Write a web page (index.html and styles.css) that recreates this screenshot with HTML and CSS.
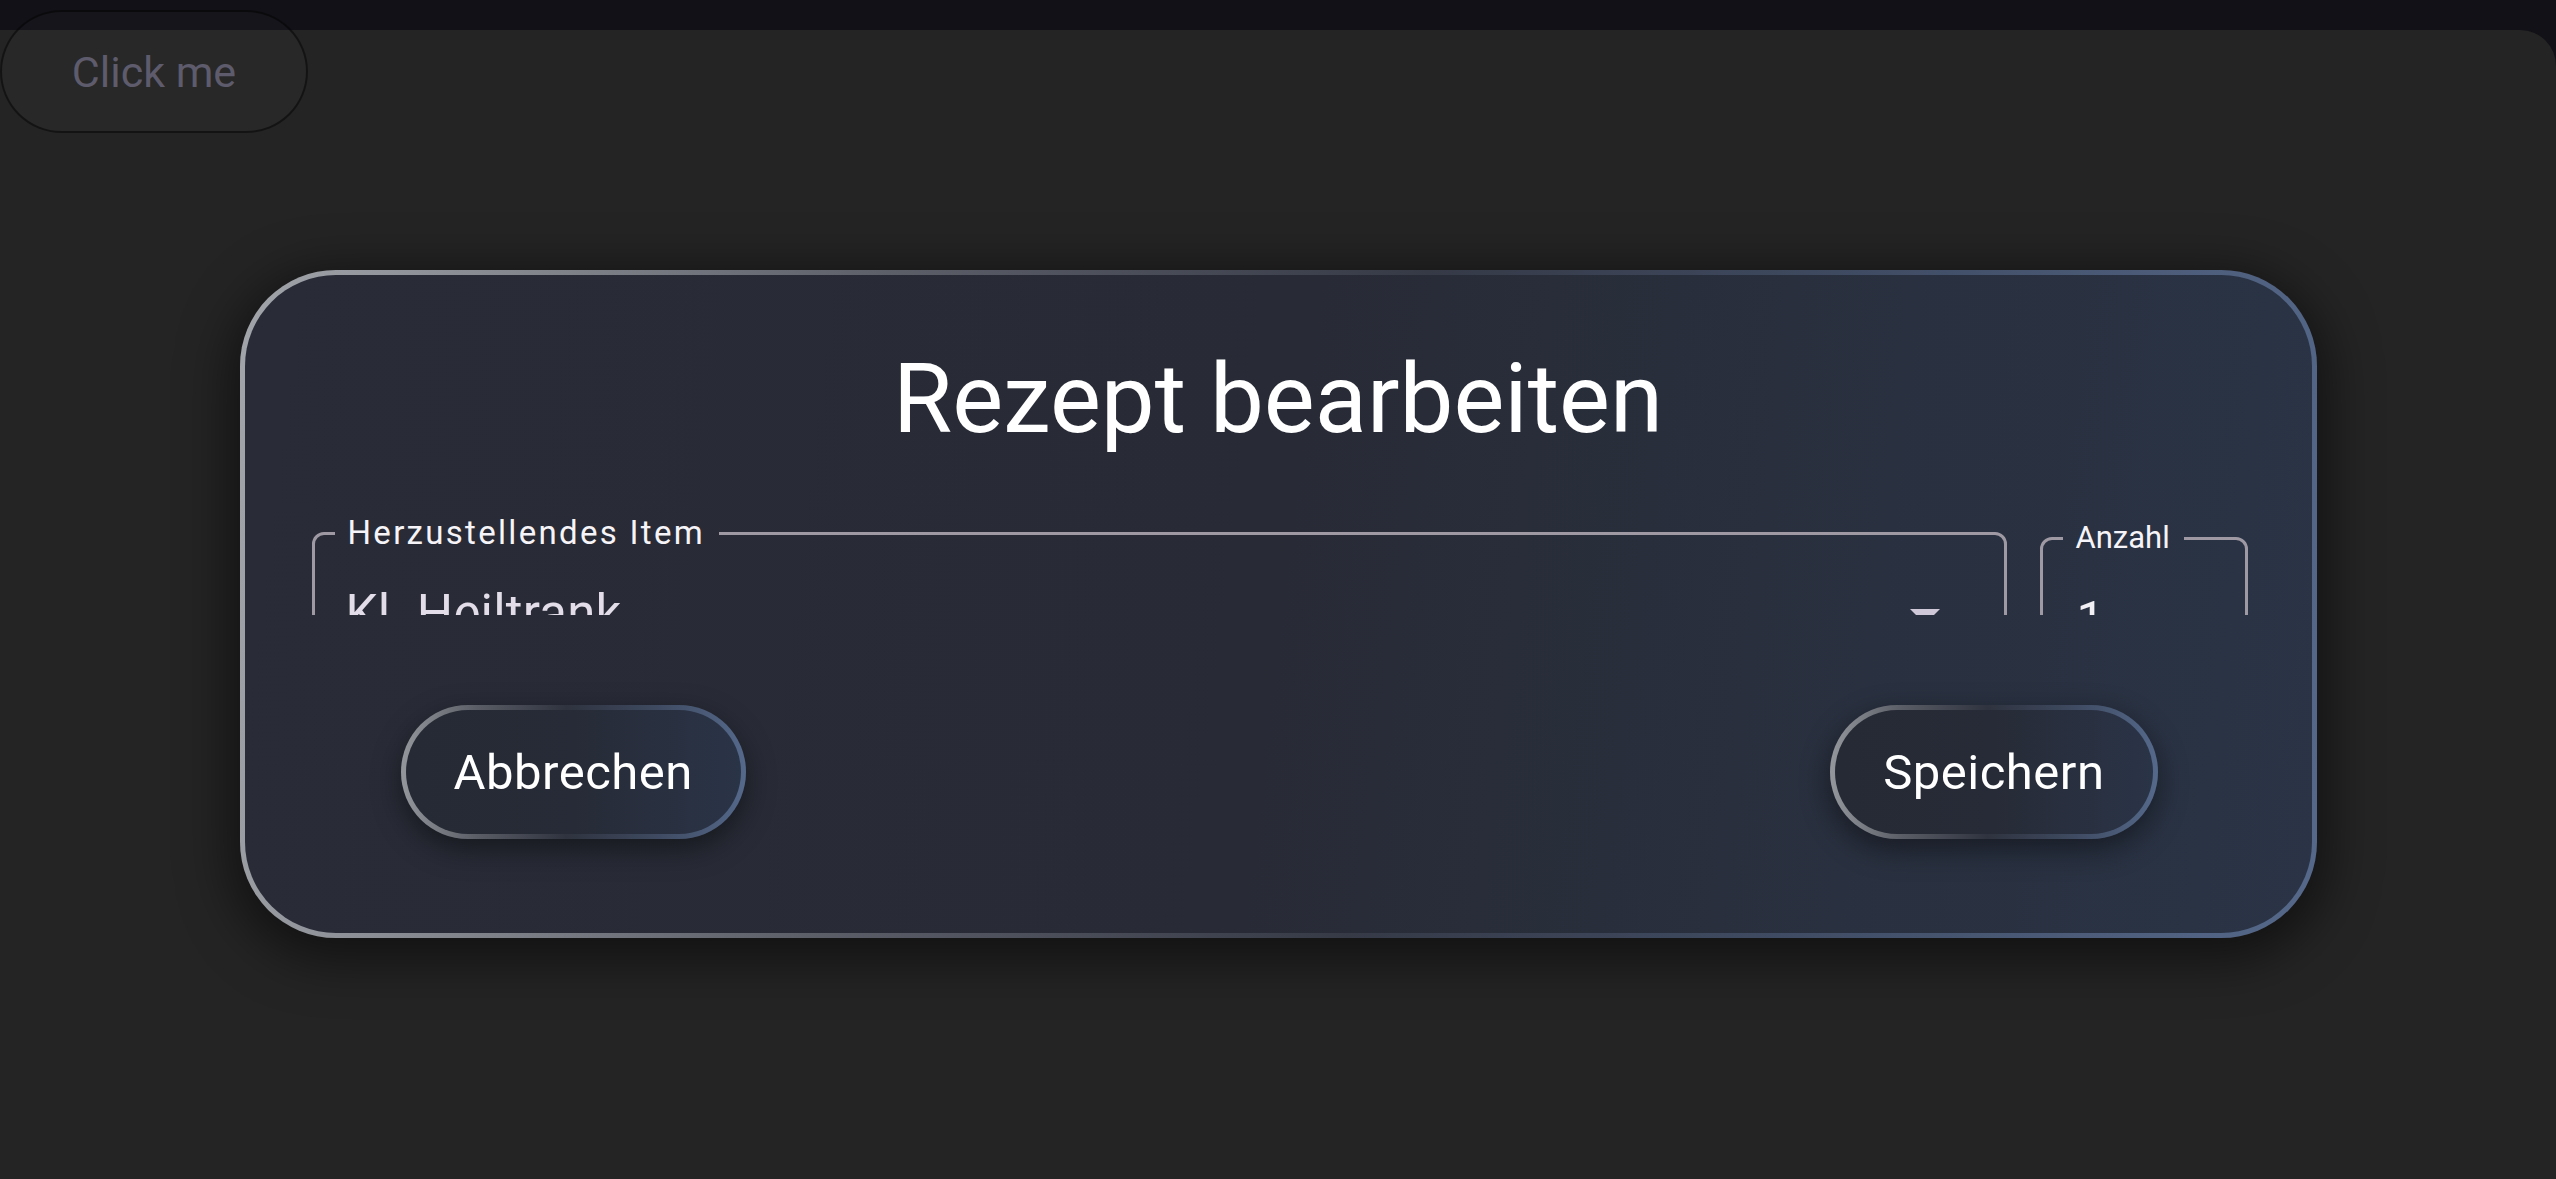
FILE: index.html
```html
<!DOCTYPE html>
<html lang="de">
<head>
<meta charset="utf-8">
<title>Rezept bearbeiten</title>
<link rel="stylesheet" href="styles.css">
</head>
<body>
<div class="page">
  <div class="panel"></div>
  <button class="click-btn" type="button">Click me</button>
  <div class="overlay">
    <section class="dialog">
      <h2 class="dialog-title">Rezept bearbeiten</h2>
      <div class="dialog-content">
        <div class="row">
          <fieldset class="field field-item">
            <legend class="label label-item">Herzustellendes Item</legend>
            <div class="field-body">
              <span class="value value-item">Kl. Heiltrank</span>
              <svg class="arrow" width="30" height="15" viewBox="0 0 30 15"><path d="M0 0 L15 15 L30 0 Z" fill="#cfc8d8"/></svg>
            </div>
          </fieldset>
          <fieldset class="field field-count">
            <legend class="label label-count">Anzahl</legend>
            <div class="field-body">
              <span class="value value-count">1</span>
            </div>
          </fieldset>
        </div>
      </div>
      <div class="dialog-actions">
        <button class="btn" type="button">Abbrechen</button>
        <button class="btn" type="button">Speichern</button>
      </div>
    </section>
  </div>
</div>
</body>
</html>
```

FILE: styles.css
```css
* { box-sizing: border-box; }

html, body {
  margin: 0;
  padding: 0;
  width: 100%;
  height: 100%;
  overflow: hidden;
}

body {
  background: #121117;
  font-family: Roboto, "Liberation Sans", Arial, sans-serif;
}

.page {
  position: relative;
  width: 100%;
  height: 100%;
  padding-top: 30px;
}

.panel {
  height: 100%;
  background: #242424;
  border-top-right-radius: 36px;
}

.click-btn {
  position: absolute;
  left: 0;
  top: 10px;
  width: 308px;
  height: 123px;
  border-radius: 62px;
  border: 2px solid rgba(0, 0, 0, 0.5);
  background: rgba(255, 255, 255, 0.02);
  color: #5d5b6c;
  font-family: Roboto, "Liberation Sans", Arial, sans-serif;
  font-size: 43px;
  padding: 0;
}

.overlay {
  position: absolute;
  inset: 0;
  display: flex;
  justify-content: center;
  align-items: flex-start;
  padding-top: 270px;
}

.dialog {
  width: 2077px;
  border: 5px solid transparent;
  border-radius: 96px;
  background:
    linear-gradient(97deg, #292c37 0%, #282b36 50%, #2a3446 100%) padding-box,
    linear-gradient(97deg, #a2a5aa 0%, #5c5f68 30%, #363a47 55%, #3f4b62 75%, #56698b 100%) border-box;
  box-shadow: 0 12px 50px 10px rgba(0, 0, 0, 0.5);
  padding-top: 68px;
  padding-bottom: 94px;
}

.dialog-title {
  margin: 0;
  text-align: center;
  color: #ffffff;
  font-weight: 400;
  font-size: 96px;
  line-height: 112px;
}

.dialog-content {
  height: 160px;
  overflow: hidden;
  padding: 60px 64px 0 67px;
}

.row {
  display: flex;
  align-items: flex-start;
  gap: 33px;
}

.field {
  margin: 0;
  min-width: 0;
  border: 3px solid #9e99a3;
  border-radius: 12px;
  padding: 0 20px 0 20px;
  height: 200px;
}

.field-item { flex: 1; }

.field-count {
  width: 208px;
  flex: none;
  margin-top: 5px;
}

.label {
  padding: 0 14px 0 13px;
  color: #f6f4f8;
  font-size: 31px;
  line-height: 36px;
}

.label-item {
  font-size: 33px;
  letter-spacing: 2.3px;
  margin-top: -1px;
}

.field-body {
  display: flex;
  align-items: flex-start;
  justify-content: space-between;
  padding-left: 11px;
}

.field-item .field-body {
  padding-top: 34px;
  padding-right: 44px;
}

.field-count .field-body {
  padding-top: 35px;
  padding-left: 14px;
}

.value {
  color: #e2dde8;
  font-size: 51px;
  line-height: 58px;
  letter-spacing: 0.2px;
}

.value-count { color: #f2f0f4; font-size: 50px; }

.arrow {
  display: block;
  margin-top: 24px;
}

.dialog-actions {
  display: flex;
  justify-content: space-between;
  padding: 0 154px 0 156px;
  margin-top: 90px;
}

.btn {
  height: 134px;
  padding: 0 48px;
  border: 5px solid transparent;
  border-radius: 67px;
  background:
    linear-gradient(90deg, #262a34 0%, #272b37 50%, #2a3447 100%) padding-box,
    linear-gradient(90deg, #94979c 0%, #5a5d65 22%, #2f333f 48%, #3f4b62 75%, #55698b 100%) border-box;
  box-shadow: 0 10px 30px rgba(0, 0, 0, 0.45);
  color: #ffffff;
  font-family: Roboto, "Liberation Sans", Arial, sans-serif;
  font-size: 49px;
  letter-spacing: 0.5px;
  font-weight: 400;
}
```
